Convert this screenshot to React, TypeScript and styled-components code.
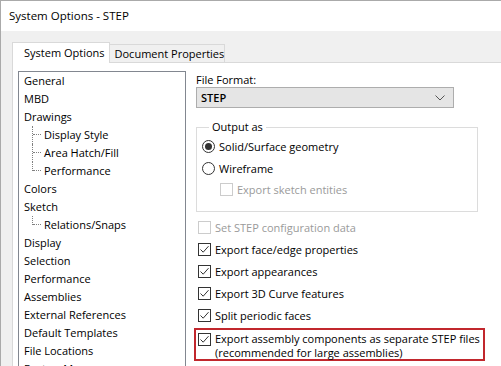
import React from 'react';
import styled, { createGlobalStyle } from 'styled-components';

const GlobalStyle = createGlobalStyle`
    html, body {
        margin: 0;
        padding: 0;
        background: #ffffff;
    }
    body {
        font-family: 'Open Sans', 'Noto Sans', sans-serif;
        font-size: 11px;
        color: #000000;
    }
`;

const Window = styled.div`
    width: 501px;
    height: 366px;
    box-sizing: border-box;
    border-top: 1px solid #aaaaaa;
    border-left: 1px solid #aaaaaa;
    display: flex;
    flex-direction: column;
    overflow: hidden;
    background: #ffffff;
`;

const TitleBar = styled.div`
    height: 30px;
    flex: none;
    display: flex;
    align-items: center;
    padding: 0 0 2px 8px;
    box-sizing: border-box;
    font-size: 11.5px;
    color: #000;
`;

const Frame = styled.div`
    flex: 1;
    background: #f0f0f0;
    padding: 11px 0 0 11px;
    display: flex;
    flex-direction: column;
    min-height: 0;
`;

const TabStrip = styled.div`
    display: flex;
    align-items: flex-end;
    height: 20px;
    flex: none;
    position: relative;
    z-index: 1;
`;

const Tab = styled.div<{ $active?: boolean }>`
    box-sizing: border-box;
    display: flex;
    align-items: center;
    border: 1px solid #d9d9d9;
    border-bottom: none;
    white-space: nowrap;
    background: ${p => (p.$active ? '#ffffff' : '#f0f0f0')};
    height: ${p => (p.$active ? '21px' : '18px')};
    margin-bottom: ${p => (p.$active ? '-1px' : '0')};
    padding: ${p => (p.$active ? '0 4px 1px 11px' : '0 0 0 5px')};
    margin-left: ${p => (p.$active ? '0' : '-1px')};
`;

const Panel = styled.div`
    flex: 1;
    background: #ffffff;
    border-top: 1px solid #d9d9d9;
    border-left: 1px solid #d9d9d9;
    display: flex;
    padding: 8px 0 0 5px;
    gap: 10px;
    min-height: 0;
`;

const TreeBox = styled.div`
    width: 168px;
    box-sizing: border-box;
    border: 1px solid #828790;
    border-bottom: none;
    flex: none;
`;

const TreeRow = styled.div<{ $child?: boolean }>`
    height: 18px;
    box-sizing: border-box;
    display: flex;
    align-items: center;
    padding-left: ${p => (p.$child ? '13px' : '5px')};
    padding-bottom: 2px;
    white-space: nowrap;
`;

const Connector = styled.span<{ $last?: boolean }>`
    width: 11px;
    height: 18px;
    margin: 2px 1px 0 0;
    position: relative;
    flex: none;
    &::before {
        content: '';
        position: absolute;
        left: 0;
        top: 0;
        height: ${p => (p.$last ? '9px' : '18px')};
        border-left: 1px dotted #808080;
    }
    &::after {
        content: '';
        position: absolute;
        left: 1px;
        top: 8px;
        width: 8px;
        border-top: 1px dotted #808080;
    }
`;

const Options = styled.div`
    width: 289px;
    flex: none;
    display: flex;
    flex-direction: column;
`;

const FieldLabel = styled.div`
    height: 16px;
    display: flex;
    align-items: center;
`;

const Select = styled.div`
    width: 258px;
    height: 21px;
    box-sizing: border-box;
    border: 1px solid #adadad;
    background: #e5e5e5;
    display: flex;
    align-items: center;
    justify-content: space-between;
    padding: 0 8px 0 4px;
    font-weight: 600;
`;

const GroupBox = styled.fieldset`
    width: 282px;
    height: 93px;
    box-sizing: border-box;
    margin: 11px 0 0 0;
    padding: 0 0 0 5px;
    border: 1px solid #dcdcdc;
    display: flex;
    flex-direction: column;
`;

const Legend = styled.legend`
    margin-left: 7px;
    padding: 0 3px;
    line-height: 16px;
`;

const OptionRow = styled.div<{ $indent?: number; $disabled?: boolean; $h?: number }>`
    display: flex;
    align-items: center;
    height: ${p => p.$h ?? 22}px;
    padding-left: ${p => p.$indent ?? 0}px;
    color: ${p => (p.$disabled ? '#9a9a9a' : '#000000')};
    white-space: nowrap;
`;

const Radio = styled.span<{ $checked?: boolean }>`
    width: 13px;
    height: 13px;
    box-sizing: border-box;
    border: 1px solid #333333;
    border-radius: 50%;
    margin-right: 4px;
    display: flex;
    align-items: center;
    justify-content: center;
    flex: none;
    &::after {
        content: '';
        display: ${p => (p.$checked ? 'block' : 'none')};
        width: 7px;
        height: 7px;
        border-radius: 50%;
        background: #333333;
    }
`;

const Box = styled.span<{ $disabled?: boolean }>`
    width: 13px;
    height: 13px;
    box-sizing: border-box;
    border: 1px solid ${p => (p.$disabled ? '#cccccc' : '#333333')};
    background: #ffffff;
    margin-right: 4px;
    display: flex;
    align-items: center;
    justify-content: center;
    flex: none;
`;

const ChecksList = styled.div`
    display: flex;
    flex-direction: column;
    padding-left: 2px;
    margin-top: 4px;
`;

const Highlight = styled.div`
    width: 291px;
    height: 33px;
    box-sizing: border-box;
    border: 2px solid #c1272d;
    margin: 2px 0 0 -4px;
    padding: 3px 0 0 2px;
    display: flex;
    align-items: flex-start;
`;

const MultiLine = styled.div`
    line-height: 14px;
    margin-top: -1px;
    white-space: nowrap;
`;

const CheckMark = () => (
    <svg width="11" height="11" viewBox="0 0 11 11">
        <path d="M1.5 5.5 L4.2 8.2 L9.5 2.2" fill="none" stroke="#333" strokeWidth="1" />
    </svg>
);

const Chevron = () => (
    <svg width="10" height="6" viewBox="0 0 10 6">
        <path d="M0.5 0.5 L5 5 L9.5 0.5" fill="none" stroke="#555" strokeWidth="1" />
    </svg>
);

const Check = ({ label, checked, disabled }: { label: string; checked?: boolean; disabled?: boolean }) => (
    <OptionRow $disabled={disabled}>
        <Box $disabled={disabled}>{checked && <CheckMark />}</Box>
        {label}
    </OptionRow>
);

const tree: { label: string; child?: boolean; last?: boolean }[] = [
    { label: 'General' },
    { label: 'MBD' },
    { label: 'Drawings' },
    { label: 'Display Style', child: true },
    { label: 'Area Hatch/Fill', child: true },
    { label: 'Performance', child: true, last: true },
    { label: 'Colors' },
    { label: 'Sketch' },
    { label: 'Relations/Snaps', child: true, last: true },
    { label: 'Display' },
    { label: 'Selection' },
    { label: 'Performance' },
    { label: 'Assemblies' },
    { label: 'External References' },
    { label: 'Default Templates' },
    { label: 'File Locations' },
    { label: 'FeatureManager' },
];

const App = () => (
    <>
        <GlobalStyle />
        <Window>
            <TitleBar>System Options - STEP</TitleBar>
            <Frame>
                <TabStrip>
                    <Tab $active>System Options</Tab>
                    <Tab>Document Properties</Tab>
                </TabStrip>
                <Panel>
                    <TreeBox>
                        {tree.map((item, i) => (
                            <TreeRow key={i} $child={item.child}>
                                {item.child && <Connector $last={item.last} />}
                                {item.label}
                            </TreeRow>
                        ))}
                    </TreeBox>
                    <Options>
                        <FieldLabel>File Format:</FieldLabel>
                        <Select>
                            STEP
                            <Chevron />
                        </Select>
                        <GroupBox>
                            <Legend>Output as</Legend>
                            <OptionRow>
                                <Radio $checked />
                                Solid/Surface geometry
                            </OptionRow>
                            <OptionRow>
                                <Radio />
                                Wireframe
                            </OptionRow>
                            <OptionRow $indent={18} $disabled $h={20}>
                                <Box $disabled />
                                Export sketch entities
                            </OptionRow>
                        </GroupBox>
                        <ChecksList>
                            <Check label="Set STEP configuration data" disabled />
                            <Check label="Export face/edge properties" checked />
                            <Check label="Export appearances" checked />
                            <Check label="Export 3D Curve features" checked />
                            <Check label="Split periodic faces" checked />
                            <Highlight>
                                <Box>
                                    <CheckMark />
                                </Box>
                                <MultiLine>
                                    Export assembly components as separate STEP files
                                    <br />
                                    (recommended for large assemblies)
                                </MultiLine>
                            </Highlight>
                        </ChecksList>
                    </Options>
                </Panel>
            </Frame>
        </Window>
    </>
);

export default App;
